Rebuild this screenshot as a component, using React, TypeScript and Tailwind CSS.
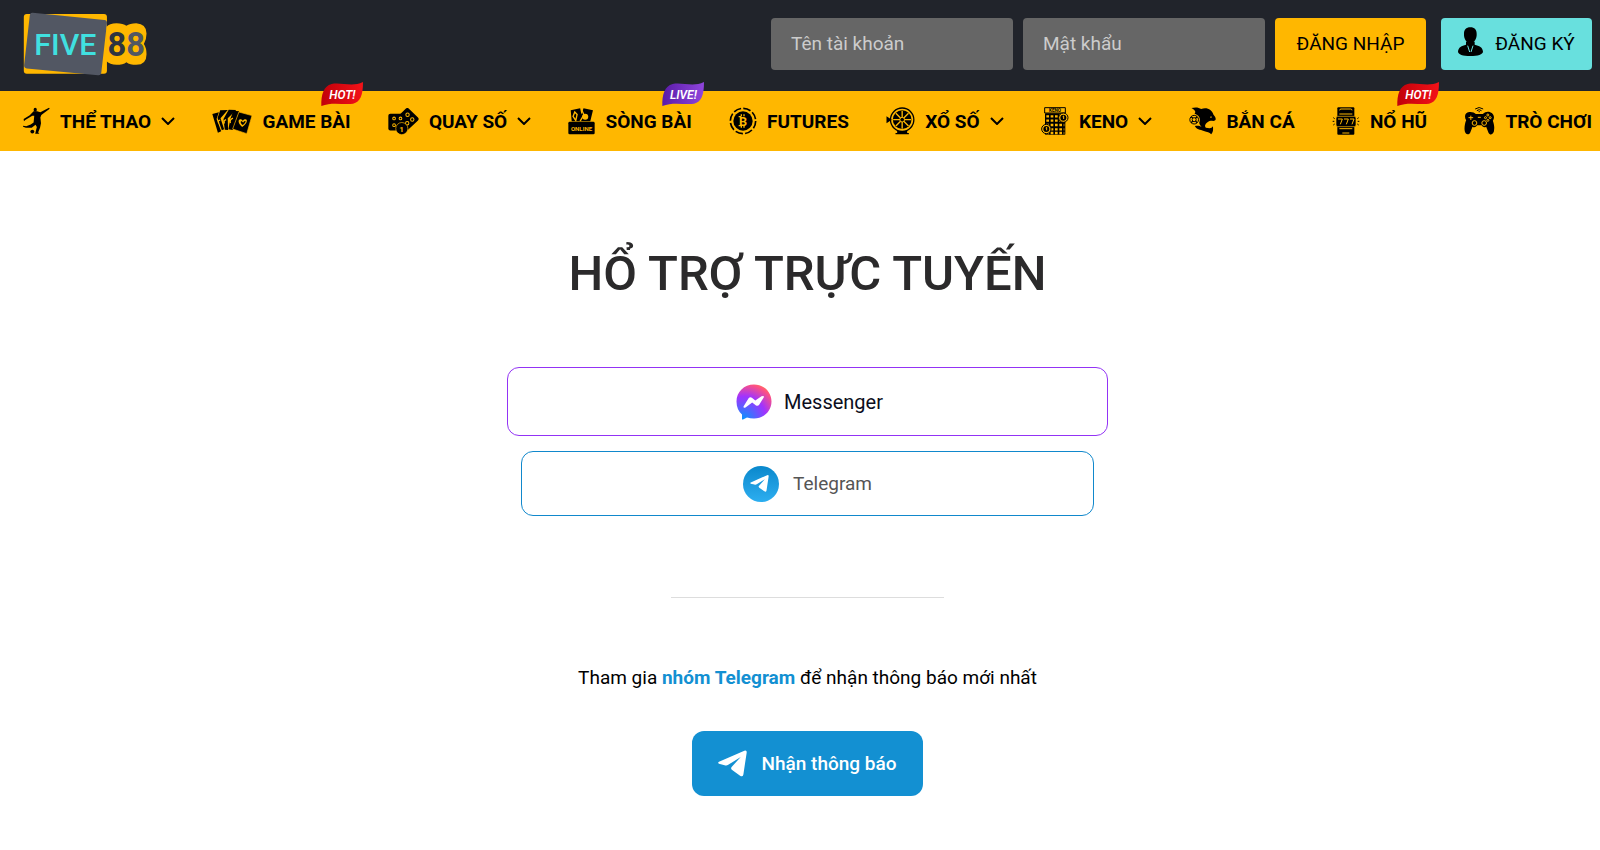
import React from "react";

const orange = "#ffb700";

function Logo() {
  return (
    <svg viewBox="68 35 376 194" className="h-16 w-[125px]" role="img" aria-label="FIVE88">
      <rect x="69" y="41" width="252" height="181" rx="9" fill={orange} />
      <path d="M96 37 L313 59 Q322 60 321 69 L304 218 Q303 228 294 227 L78 206 Q69 205 70 196 L87 46 Q88 36 96 37Z" fill="#525763" />
      <path d="M320 80 Q328 69 350 69 Q370 69 380 77 Q390 69 410 69 Q441 71 441 100 Q441 118 433 132 Q441 144 441 163 Q441 195 410 195 Q390 195 380 187 Q370 195 350 195 Q330 195 318 183Z" fill={orange} />
      <g fontFamily="Roboto, sans-serif" fontWeight="700">
        <text x="101" y="165" fontSize="92" fontWeight="500" fill="#40e0e0">FIVE</text>
        <text x="323" y="168" fontSize="99">
          <tspan fill="#2f3540">8</tspan>
          <tspan fill="#525763">8</tspan>
        </text>
      </g>
    </svg>
  );
}

function Badge({ text, live }: { text: string; live?: boolean }) {
  return (
    <svg viewBox="0 0 126 72" className="absolute -top-[9px] -right-3 h-6 w-[42px]">
      <defs>
        <linearGradient id={live ? "live" : "hot"}>
          <stop offset="0" stopColor={live ? "#5a1ba8" : "#c1000a"} />
          <stop offset="1" stopColor={live ? "#8f45dc" : "#f31218"} />
        </linearGradient>
      </defs>
      <path d="M126 0 C126 40 118 60 96 65 C70 70 36 58 1 72 C0 38 8 12 32 6 C60 0 94 16 126 0Z" fill={live ? "url(#live)" : "url(#hot)"} />
      <text x="64" y="50" textAnchor="middle" fill="#fff" fontSize="36" fontWeight="600" fontStyle="italic" fontFamily="Roboto, sans-serif">{text}</text>
    </svg>
  );
}

const SportIcon = () => (
  <svg viewBox="69 319 84 84" className="h-7 w-[27px] shrink-0">
    <ellipse cx="107" cy="326" rx="5" ry="6" />
    <path d="M102 331 L113 331 L123 334 L150 320 L152 323 L126 342 L123 350 L125 368 L122 382 L116 397 L120 399 L117 401 L107 401 L112 380 L108 373 L96 382 L78 382 L69 379 L70 376 L79 377 L93 372 L102 366 L104 345 L98 345 L76 358 L72 362 L71 355 L90 343Z" />
    <circle cx="98" cy="394" r="6" />
  </svg>
);

const CardsIcon = () => (
  <svg viewBox="639 322 122 76" className="h-[25px] w-10 shrink-0">
    <path d="M640 337 L660 332 L653 352 L667 390 L657 394Z" />
    <path d="M664 326 L687 325 L665 350 L676 384 L669 387 L656 349Z" />
    <path d="M690 324 L713 325 L687 350 L688 386 L678 385 L674 352Z" />
    <path d="M704 327 L722 329 L702 386 L689 384 L695 352Z" />
    <path d="M721 331 L761 342 L745 397 L702 383Z" stroke={orange} strokeWidth="2" />
    <path d="M731 377 C716 364 718 350 729 354 L733 358 C743 346 756 359 731 377Z M733 371 C746 360 742 353 734 363 C727 354 722 362 733 371Z" fill={orange} fillRule="evenodd" />
    <path d="M664 356 q-9 2 -4 10 M682 354 q-9 3 -5 12 M703 350 q-11 4 -8 15" fill="none" stroke={orange} strokeWidth="4" />
  </svg>
);

const LotteryIcon = () => (
  <svg viewBox="57 94 92 80" className="h-[27px] w-[31px] shrink-0">
    <path d="M111 95 Q115 92 119 96 L146 122 Q150 127 146 131 L115 160 L96 146 L92 113Z" />
    <rect x="58" y="111" width="49" height="50" rx="6" />
    <g fill="#000" stroke={orange} strokeWidth="3">
      <circle cx="75" cy="125" r="4" /><circle cx="94" cy="125" r="4" />
      <circle cx="75" cy="145" r="4" /><circle cx="115" cy="114" r="5" />
      <circle cx="129" cy="128" r="5" /><circle cx="114" cy="139" r="5" />
      <circle cx="98" cy="155" r="18" strokeWidth="2" />
    </g>
    <text x="97" y="164" textAnchor="middle" fill={orange} fontSize="24" fontWeight="700" fontFamily="Roboto, sans-serif">1</text>
  </svg>
);

const OnlineIcon = () => (
  <svg viewBox="598 94 80 80" className="h-[27px] w-[27px] shrink-0">
    <path d="M606 101 L634 95 L642 133 L609 133Z M644 95 L672 101 L664 133 L631 133Z" />
    <path d="M638 98 L645 114 L634 133 M618 106 L625 113 L621 131 L613 119Z" fill="none" stroke={orange} strokeWidth="4" />
    <circle cx="649" cy="120" r="9" fill={orange} />
    <path d="M599 139 Q599 135 603 135 H673 Q677 135 677 139 V168 Q677 172 673 172 H603 Q599 172 599 168Z" />
    <text x="638" y="161" textAnchor="middle" fill={orange} fontSize="18" fontWeight="700" fontFamily="Roboto, sans-serif">ONLINE</text>
  </svg>
);

const FuturesIcon = () => (
  <svg viewBox="91 93 84 84" className="size-7 shrink-0">
    <circle cx="133" cy="135" r="38" fill="none" stroke="#000" strokeWidth="5" strokeDasharray="23 6.8" />
    <circle cx="133" cy="135" r="29" />
    <text x="133" y="149" textAnchor="middle" fill={orange} fontSize="38" fontWeight="700" fontFamily="Roboto, sans-serif">B</text>
    <path d="M128 115 v6 M136 115 v6 M128 149 v6 M136 149 v6 M120 122 h8 M120 149 h8" stroke={orange} strokeWidth="4" />
  </svg>
);

const WheelIcon = () => (
  <svg viewBox="561 93 86 84" className="h-7 w-[29px] shrink-0">
    <circle cx="609" cy="131" r="35" fill="none" stroke="#000" strokeWidth="4" />
    <circle cx="609" cy="131" r="28" />
    <path d="M609 104 V158 M582 131 H636 M590 112 L628 150 M628 112 L590 150" stroke={orange} strokeWidth="4" />
    <circle cx="609" cy="131" r="7" stroke={orange} strokeWidth="3" />
    <path d="M562 121 L578 131 L562 142Z M594 165 H624 V171 H629 V175 H589 V171 H594Z" />
  </svg>
);

const KenoIcon = () => (
  <svg viewBox="66 93 84 84" className="size-7 shrink-0">
    <path d="M77 111 V95 H139 V111Z" fill="none" stroke="#000" strokeWidth="3" />
    <text x="108" y="109" textAnchor="middle" fontSize="14" fontWeight="700" fontFamily="Roboto, sans-serif">KENO</text>
    <rect x="78" y="112" width="61" height="64" rx="2" />
    <g stroke={orange} strokeWidth="7" strokeDasharray="8 5" fill="none">
      <path d="M82 121 H136 M82 134 H136 M82 147 H136 M82 160 H136 M82 171 H136" />
    </g>
    <g fill={orange} stroke="#000" strokeWidth="3">
      <circle cx="133" cy="125" r="14" /><circle cx="82" cy="159" r="14" />
    </g>
    <circle cx="133" cy="125" r="9" /><circle cx="82" cy="159" r="9" />
    <path d="M131 122 l3 -2 v9 M80 156 l3 -2 v9" fill="none" stroke={orange} strokeWidth="3" />
  </svg>
);

const FishIcon = () => (
  <svg viewBox="512 93 80 84" className="h-7 w-[27px] shrink-0">
    <path d="M519 96 C531 93 541 94 548 99 C566 93 580 101 585 116 C592 123 593 130 590 133 C584 138 577 131 569 137 C560 143 557 150 562 155 C572 157 580 158 583 151 C585 162 583 170 578 175 C573 169 566 168 556 165 C545 161 533 160 529 150 C540 148 545 151 549 152 C541 146 541 136 543 128 L528 112 C534 108 528 101 519 96Z" />
    <path d="M575 124 q3 -3 5 0" fill="none" stroke={orange} strokeWidth="3" />
    <g fill="none" stroke="#000" strokeWidth="3">
      <circle cx="527" cy="131" r="15" fill={orange} stroke={orange} strokeWidth="4" />
      <circle cx="527" cy="131" r="13" /><circle cx="527" cy="131" r="6" />
      <path d="M518 122 L523 127 M531 135 L536 140 M536 122 L531 127 M523 135 L518 140" strokeWidth="4" />
    </g>
  </svg>
);

const SlotIcon = () => (
  <svg viewBox="101 93 84 84" className="size-7 shrink-0">
    <rect x="117" y="94" width="51" height="82" rx="3" />
    <path d="M124 103 Q124 99 128 99 H157 Q161 99 161 103 M123 114 H162 M123 158 H162 M132 171 H153" fill="none" stroke={orange} strokeWidth="3" />
    <rect x="113" y="121" width="60" height="31" rx="5" stroke={orange} strokeWidth="2" />
    <path d="M119 129 h13 l-6 16 M137 129 h13 l-6 16 M155 129 h12 l-6 16" fill="none" stroke={orange} strokeWidth="3" />
    <path d="M103 136 h5 M105 125 l4 3 M105 147 l4 -3 M183 136 h-5 M181 125 l-4 3 M181 147 l-4 -3" stroke="#000" strokeWidth="3" />
  </svg>
);

const GamepadIcon = () => (
  <svg viewBox="496 93 92 84" className="h-7 w-[31px] shrink-0">
    <path d="M497 159 C497 149 499 140 502 133 C495 121 499 109 511 108 C520 107 527 110 531 114 H552 C559 108 567 106 574 109 C585 113 589 124 582 134 C585 142 587 151 586 159 C586 176 574 180 569 170 L562 152 C555 156 550 151 548 148 H535 C531 154 526 155 521 152 L514 170 C508 180 497 174 497 159Z" />
    <path d="M516 119 v13 M509 125 h14" stroke={orange} strokeWidth="3" />
    <g fill="none" stroke={orange} strokeWidth="3">
      <circle cx="527" cy="141" r="7" /><circle cx="556" cy="141" r="7" />
      <circle cx="567" cy="117" r="3" /><circle cx="574" cy="125" r="3" /><circle cx="560" cy="125" r="3" /><circle cx="567" cy="133" r="3" />
      <path d="M537 124 h9" />
    </g>
    <path d="M529 99 Q541 90 553 99 M534 104 Q541 98 548 104" fill="none" stroke="#000" strokeWidth="3" />
    <circle cx="541" cy="107" r="2" />
  </svg>
);

const Chevron = () => (
  <svg viewBox="0 0 14 8" className="h-2 w-[14px] shrink-0" fill="none" stroke="#000" strokeWidth="2">
    <path d="M1 1 L7 7 L13 1" />
  </svg>
);

const Plane = ({ className }: { className: string }) => (
  <svg viewBox="0 0 88 80" className={className} fill="#fff">
    <path d="M3 35 L80 1 Q88 -2 87 7 L77 73 Q75 82 67 77 L43 60 Q37 55 42 50 L69 20 L31 44 Q26 47 20 45 L3 41 Q-2 38 3 35Z" />
  </svg>
);

const menu = [
  { label: "THỂ THAO", icon: SportIcon, more: true },
  { label: "GAME BÀI", icon: CardsIcon, badge: "HOT!" },
  { label: "QUAY SỐ", icon: LotteryIcon, more: true },
  { label: "SÒNG BÀI", icon: OnlineIcon, badge: "LIVE!" },
  { label: "FUTURES", icon: FuturesIcon },
  { label: "XỔ SỐ", icon: WheelIcon, more: true },
  { label: "KENO", icon: KenoIcon, more: true },
  { label: "BẮN CÁ", icon: FishIcon },
  { label: "NỔ HŨ", icon: SlotIcon, badge: "HOT!" },
  { label: "TRÒ CHƠI", icon: GamepadIcon },
];

export default function App() {
  return (
    <div className="min-h-screen bg-white font-['Roboto',sans-serif] text-black">
      <header>
        <div className="flex h-[91px] items-center justify-between bg-[#21242b] pr-2 pb-1 pl-[23px]">
          <a href="#"><Logo /></a>
          <form className="flex items-center text-[19px]">
            <input type="text" aria-label="Tên tài khoản" placeholder="Tên tài khoản" className="h-[52px] w-[242px] rounded bg-[#666] px-5 text-white placeholder:text-[#ccc]" />
            <input type="password" aria-label="Mật khẩu" placeholder="Mật khẩu" className="ml-[10px] h-[52px] w-[242px] rounded bg-[#666] px-5 text-white placeholder:text-[#ccc]" />
            <button type="button" className="ml-[10px] h-[52px] w-[151px] rounded bg-[#ffb700] pt-0.5">ĐĂNG NHẬP</button>
            <button type="button" className="ml-[15px] flex h-[52px] w-[151px] items-center justify-center gap-3 rounded bg-[#68e0de]">
              <svg viewBox="0 0 75 87" className="mb-1 h-[29px] w-[25px]">
                <path d="M37 1 C50 1 56 9 56 20 C57 34 49 49 37 49 C25 49 17 34 18 20 C18 9 24 1 37 1Z" />
                <path d="M24 44 H50 V53 C64 57 74 60 75 74 C74 82 60 87 37 87 C14 87 1 82 0 74 C1 60 11 57 24 53Z" />
                <path d="M29 56 L35 75 M45 56 L39 75" stroke="#68e0de" strokeWidth="3" />
              </svg>
              <span className="pt-0.5">ĐĂNG KÝ</span>
            </button>
          </form>
        </div>
        <nav className="flex h-[60px] justify-between bg-[#ffb700] pr-2 pl-[23px] text-[19px] font-bold whitespace-nowrap">
          {menu.map(({ label, icon: Icon, more, badge }) => (
            <a key={label} href="#" className="relative flex items-center gap-[10px]">
              <Icon />
              <span className="pt-0.5">{label}</span>
              {more && <Chevron />}
              {badge && <Badge text={badge} live={badge === "LIVE!"} />}
            </a>
          ))}
        </nav>
      </header>

      <main className="flex flex-col items-center pt-[93px] pb-12 pl-[15px] text-[19px]">
        <h1 className="text-[49px] leading-[60px] font-medium text-[#2b2a2b]">HỔ TRỢ TRỰC TUYẾN</h1>

        <a href="#" className="mt-[63px] flex h-[69px] w-full max-w-[601px] items-center justify-center gap-3 rounded-xl border border-[#9333f5] pl-1 text-xl text-[#0b0d20]">
          <svg viewBox="0 0 36 36" className="size-9">
            <defs>
              <radialGradient id="messenger" cx="0.2" cy="1" r="1.1">
                <stop offset="0" stopColor="#0695ff" />
                <stop offset="0.6" stopColor="#a033ff" />
                <stop offset="0.93" stopColor="#ff5280" />
                <stop offset="1" stopColor="#ff7061" />
              </radialGradient>
            </defs>
            <path d="M18 0.5 C28 0.5 35.5 8 35.5 17.5 C35.5 27 28 34.5 18 34.5 Q14 34.5 11 33.5 L7 35.5 Q6 36 6 34.5 L6 30.5 C2.5 27.5 0.5 23 0.5 17.5 C0.5 8 8 0.5 18 0.5Z" fill="url(#messenger)" />
            <path d="M7.5 22.5 L12.6 14.3 Q14 12.5 15.9 13.7 L19.3 16.5 L25.5 12.3 Q28 11.2 28 13 L23.2 20.8 Q22 22.5 20 21.5 L16.2 18.6 L9.5 23.5 Q7.2 24.5 7.5 22.5Z" fill="#fff" />
          </svg>
          Messenger
        </a>
        <a href="#" className="mt-[15px] flex h-[65px] w-full max-w-[573px] items-center justify-center gap-[14px] rounded-xl border border-[#1188cc] text-[#555]">
          <span className="flex size-9 items-center justify-center rounded-full bg-linear-to-b from-[#0888cc] to-[#2caef0] pr-1">
            <Plane className="h-[17px] w-[19px]" />
          </span>
          <span className="pt-0.5">Telegram</span>
        </a>

        <hr className="mt-[81px] w-[273px] border-[#ddd]" />

        <p className="mt-[66px] leading-7">
          Tham gia <a href="#" className="font-bold text-[#1390d2]">nhóm Telegram</a> để nhận thông báo mới nhất
        </p>
        <button type="button" className="mt-[39px] flex h-[65px] w-[231px] items-center justify-center gap-[14px] rounded-xl bg-[#1390d2] font-medium text-white">
          <Plane className="h-[27px] w-[29px]" />
          <span className="pt-0.5">Nhận thông báo</span>
        </button>
      </main>
    </div>
  );
}
